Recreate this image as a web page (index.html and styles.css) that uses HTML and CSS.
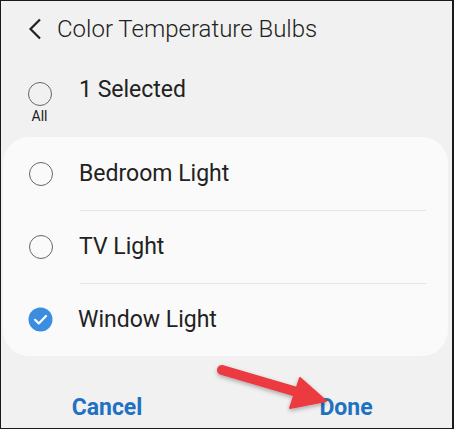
FILE: index.html
```html
<!DOCTYPE html>
<html lang="en">
<head>
  <meta charset="UTF-8">
  <title>Color Temperature Bulbs</title>
  <link rel="stylesheet" href="styles.css">
</head>
<body>
  <div class="frame">
    <div class="header">
      <svg class="back" width="14" height="22" viewBox="0 0 14 22">
        <path d="M12 1.5 L2.5 11 L12 20.5" fill="none" stroke="#222" stroke-width="2.2"/>
      </svg>
      <span class="title">Color Temperature Bulbs</span>
    </div>

    <div class="all-row">
      <div class="all-box">
        <span class="radio"></span>
        <span class="all-label">All</span>
      </div>
      <span class="count">1 Selected</span>
    </div>

    <div class="card">
      <div class="row">
        <span class="radio"></span>
        <span class="name">Bedroom Light</span>
      </div>
      <div class="row">
        <span class="radio"></span>
        <span class="name">TV Light</span>
      </div>
      <div class="row">
        <svg class="check" width="25" height="25" viewBox="0 0 25 25">
          <circle cx="12.5" cy="12.5" r="12" fill="#3b8de0"/>
          <path d="M7 12.8 L10.8 16.4 L18 9" fill="none" stroke="#fff" stroke-width="2.2" stroke-linecap="round" stroke-linejoin="round"/>
        </svg>
        <span class="name">Window Light</span>
      </div>
    </div>

    <div class="actions">
      <button class="action">Cancel</button>
      <button class="action">Done</button>
    </div>

    <!-- red callout arrow -->
    <svg class="arrow" width="140" height="65" viewBox="0 0 140 65">
      <defs>
        <filter id="sh" x="-20%" y="-20%" width="140%" height="150%">
          <feDropShadow dx="0" dy="2" stdDeviation="2" flood-color="#000" flood-opacity="0.3"/>
        </filter>
      </defs>
      <g filter="url(#sh)">
        <line x1="17" y1="15" x2="92" y2="37" stroke="#ec3b3f" stroke-width="10" stroke-linecap="round"/>
        <polygon points="95,23 121,46 85,53" fill="#ec3b3f" stroke="#ec3b3f" stroke-width="2" stroke-linejoin="round"/>
      </g>
    </svg>
  </div>
</body>
</html>
```

FILE: styles.css
```css
body {
  margin: 0;
  background: #fff;
  font-family: Roboto, "Liberation Sans", sans-serif;
  color: #222;
}

.frame {
  position: relative;
  box-sizing: border-box;
  width: 454px;
  height: 429px;
  background: #f1f1f1;
  border: 1px solid #1a1a1a;
  border-right-width: 2px;
  overflow: hidden;
}

.header {
  display: flex;
  align-items: center;
  height: 55px;
  padding-left: 27px;
  gap: 15px;
}

.title {
  font-size: 24px;
  font-weight: 300;
}

.all-row {
  display: flex;
  align-items: flex-start;
  height: 81px;
  padding-left: 26px;
}

.all-box {
  display: flex;
  flex-direction: column;
  align-items: center;
  padding-top: 26px;
  width: 25px;
}

.all-label {
  font-size: 14px;
  margin-top: 2px;
}

.count {
  font-size: 23px;
  margin-left: 27px;
  margin-top: 20px;
}

.radio {
  display: block;
  box-sizing: border-box;
  width: 24px;
  height: 24px;
  border: 1.5px solid #666;
  border-radius: 50%;
  flex-shrink: 0;
}

.card {
  margin: 0 4px 0 2px;
  background: #fafafa;
  border-radius: 26px;
}

.row {
  display: flex;
  align-items: center;
  height: 73px;
  padding-left: 25px;
  position: relative;
}

.row + .row::before {
  content: "";
  position: absolute;
  top: 0;
  left: 77px;
  right: 22px;
  border-top: 1px solid #e4e4e4;
}

.row .radio {
  margin-left: 1px;
}

.name {
  font-size: 23px;
  margin-left: 26px;
}

.row .check + .name {
  margin-left: 25px;
}

.actions {
  display: flex;
  justify-content: center;
  gap: 39px;
  height: 72px;
  padding-top: 36px;
  box-sizing: border-box;
}

.action {
  width: 200px;
  height: 30px;
  background: none;
  border: none;
  font-family: Roboto, "Liberation Sans", sans-serif;
  font-weight: bold;
  font-size: 23px;
  color: #1f72c2;
  padding: 0;
}

.arrow {
  position: absolute;
  left: 204px;
  top: 354px;
}
```
